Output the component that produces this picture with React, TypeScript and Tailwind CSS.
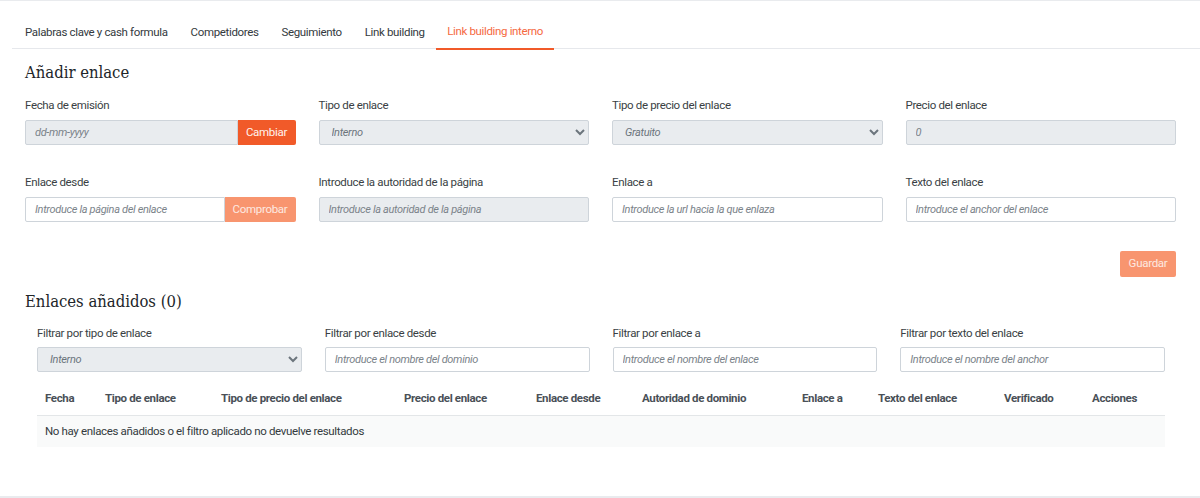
import React from 'react';

const labelCls = 'block text-[11.5px] leading-[18px] tracking-[-0.35px] text-[#3a3f44]';
const inputCls =
  'block w-full h-[25px] px-[9px] border border-[#ced4da] rounded-[2px] text-[11px] tracking-[-0.33px] italic text-[#6c757d] placeholder:text-[#7b838a] outline-none min-w-0';
const grayCls = 'bg-[#e9ecef]';
const headingCls =
  "font-['DejaVu_Serif_Condensed','DejaVu_Serif',serif] text-[16.5px] leading-[24px] text-[#212529]";

const tabs = ['Palabras clave y cash formula', 'Competidores', 'Seguimiento', 'Link building'];

const headers = [
  { name: 'Fecha', w: 'w-[60px]' },
  { name: 'Tipo de enlace', w: 'w-[116px]' },
  { name: 'Tipo de precio del enlace', w: 'w-[183px]' },
  { name: 'Precio del enlace', w: 'w-[132px]' },
  { name: 'Enlace desde', w: 'w-[106px]' },
  { name: 'Autoridad de dominio', w: 'w-[160px]' },
  { name: 'Enlace a', w: 'w-[76px]' },
  { name: 'Texto del enlace', w: 'w-[126px]' },
  { name: 'Verificado', w: 'w-[88px]' },
  { name: 'Acciones', w: 'w-[81px]' },
];

const Field = ({ label, tight, children }: { label: string; tight?: boolean; children: React.ReactNode }) => (
  <div>
    <label className={`${labelCls} ${tight ? 'mb-[5px]' : 'mb-[6px]'}`}>{label}</label>
    {children}
  </div>
);

const Select = ({ value }: { value: string }) => (
  <select className={`${inputCls} ${grayCls} pl-[8px] pr-[3px]`} defaultValue={value}>
    <option>{value}</option>
  </select>
);

export default function App() {
  return (
    <div className="w-[1200px] h-[498px] overflow-hidden bg-white border-t border-[#e9ebee] font-['Roboto',sans-serif] flex flex-col">
      {/* Tabs */}
      <div className="ml-[12px] mt-[15px] h-[33px] flex items-stretch border-b border-[#e6e8ec] shrink-0">
        {tabs.map((t) => (
          <div key={t} className="px-[11.5px] text-[11.5px] tracking-[-0.35px] leading-[32px] text-[#343a40] first:pl-[13px]">
            {t}
          </div>
        ))}
        <div className="px-[11px] text-[11.5px] tracking-[-0.35px] leading-[31px] text-[#f5693f] border-b-2 border-[#f15a29] h-[34px]">
          Link building interno
        </div>
      </div>

      <div className="pl-[25px] pr-[24px] flex-1">
        <h2 className={`${headingCls} mt-[12px] mb-[11px]`}>Añadir enlace</h2>

        {/* Add form */}
        <div className="grid grid-cols-4 gap-x-[23px] gap-y-[28px]">
          <Field label="Fecha de emisión">
            <div className="flex">
              <input className={`${inputCls} ${grayCls} rounded-r-none flex-1`} placeholder="dd-mm-yyyy" />
              <button className="w-[58px] shrink-0 h-[25px] bg-[#f15a29] text-[#fff3ee] text-[11.5px] tracking-[-0.3px] rounded-r-[2px]">
                Cambiar
              </button>
            </div>
          </Field>
          <Field label="Tipo de enlace">
            <Select value="Interno" />
          </Field>
          <Field label="Tipo de precio del enlace">
            <Select value="Gratuito" />
          </Field>
          <Field label="Precio del enlace">
            <input className={`${inputCls} ${grayCls}`} placeholder="0" />
          </Field>
          <Field label="Enlace desde">
            <div className="flex">
              <input className={`${inputCls} rounded-r-none flex-1`} placeholder="Introduce la página del enlace" />
              <button className="w-[71px] shrink-0 h-[25px] bg-[#f8956f] text-[#fde9e1] text-[11.5px] tracking-[-0.3px] rounded-r-[2px]">
                Comprobar
              </button>
            </div>
          </Field>
          <Field label="Introduce la autoridad de la página">
            <input className={`${inputCls} ${grayCls}`} placeholder="Introduce la autoridad de la página" />
          </Field>
          <Field label="Enlace a">
            <input className={inputCls} placeholder="Introduce la url hacia la que enlaza" />
          </Field>
          <Field label="Texto del enlace">
            <input className={inputCls} placeholder="Introduce el anchor del enlace" />
          </Field>
        </div>

        <div className="flex justify-end mt-[29px]">
          <button className="w-[56px] h-[26px] bg-[#f8956f] text-[#fde9e1] text-[11.5px] tracking-[-0.3px] rounded-[2px]">
            Guardar
          </button>
        </div>

        <h2 className={`${headingCls} mt-[13px] mb-[10px]`}>Enlaces añadidos (0)</h2>

        {/* Filters and table */}
        <div className="pl-[12px] pr-[11px]">
          <div className="grid grid-cols-4 gap-x-[23px]">
            <Field tight label="Filtrar por tipo de enlace">
              <Select value="Interno" />
            </Field>
            <Field tight label="Filtrar por enlace desde">
              <input className={inputCls} placeholder="Introduce el nombre del dominio" />
            </Field>
            <Field tight label="Filtrar por enlace a">
              <input className={inputCls} placeholder="Introduce el nombre del enlace" />
            </Field>
            <Field tight label="Filtrar por texto del enlace">
              <input className={inputCls} placeholder="Introduce el nombre del anchor" />
            </Field>
          </div>

          <table className="w-full table-fixed mt-[10px] border-collapse">
            <thead>
              <tr className="border-b border-[#e3e6e8]">
                {headers.map((h) => (
                  <th
                    key={h.name}
                    className={`${h.w} h-[33px] pl-[8px] text-left text-[11.5px] tracking-[-0.35px] font-bold text-[#495057]`}
                  >
                    {h.name}
                  </th>
                ))}
              </tr>
            </thead>
            <tbody>
              <tr className="bg-[#f9fafa]">
                <td colSpan={10} className="h-[32px] pl-[8px] text-[11.5px] tracking-[-0.35px] text-[#343a40]">
                  No hay enlaces añadidos o el filtro aplicado no devuelve resultados
                </td>
              </tr>
            </tbody>
          </table>
        </div>
      </div>

      <div className="h-[2px] bg-[#e9ebee] shrink-0" />
    </div>
  );
}
